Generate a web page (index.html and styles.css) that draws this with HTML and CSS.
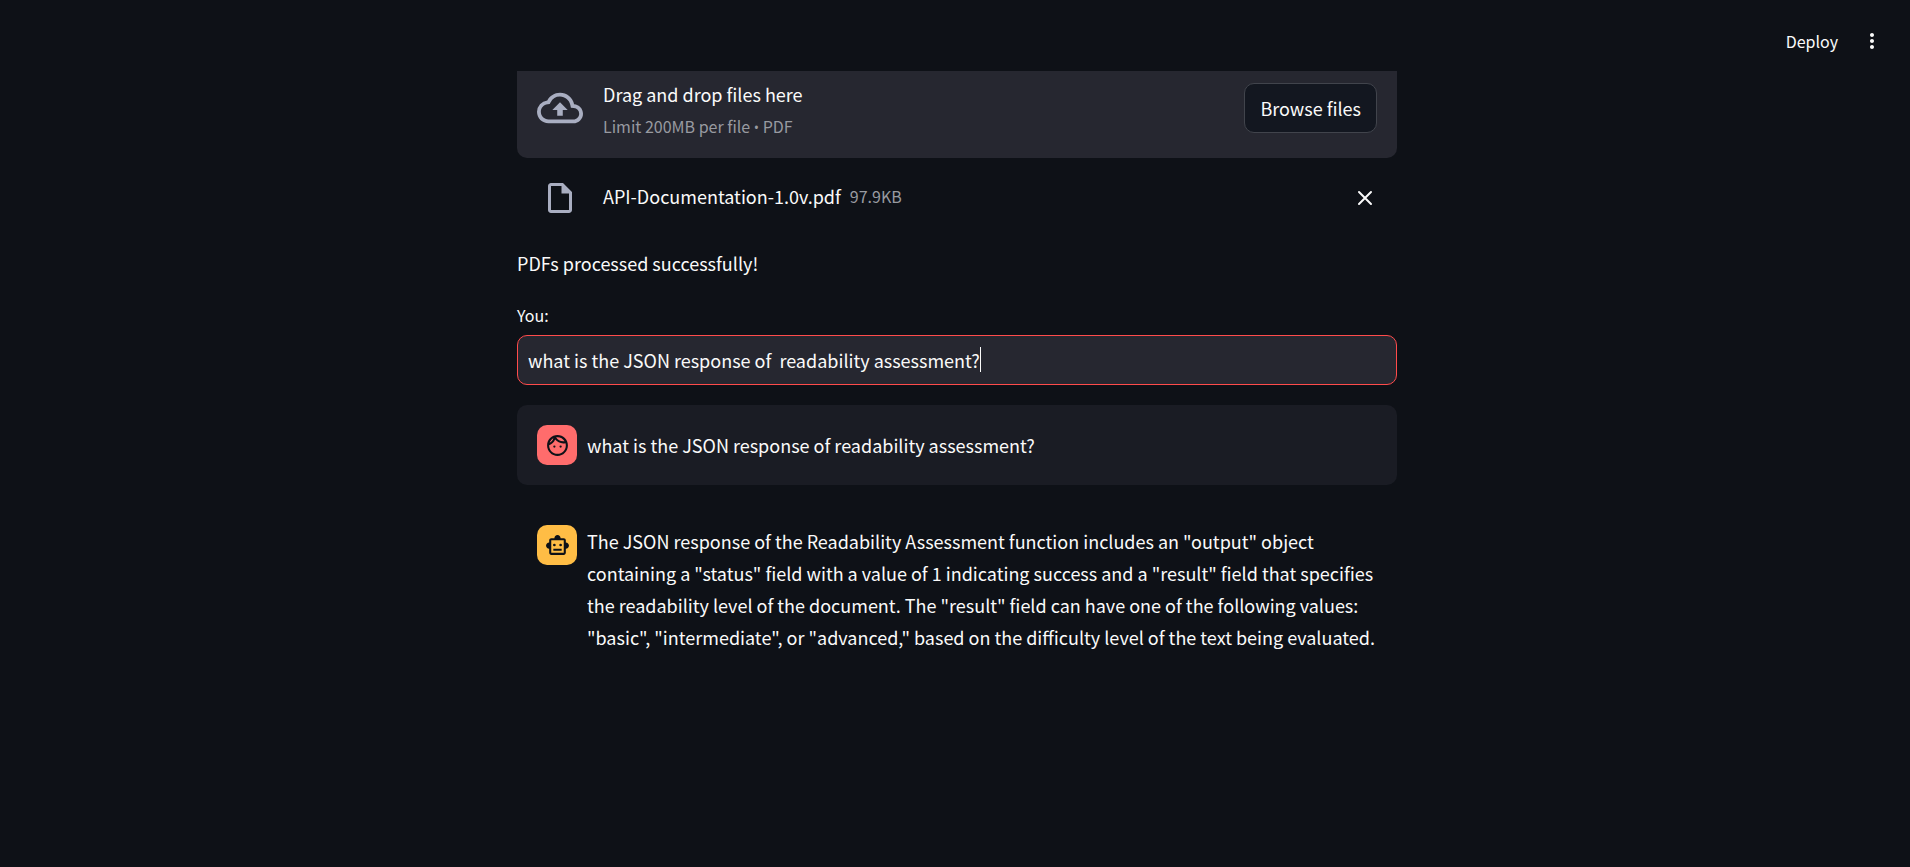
FILE: index.html
```html
<!DOCTYPE html>
<html lang="en">
<head>
<meta charset="utf-8">
<title>PDF Chat</title>
<link rel="stylesheet" href="styles.css">
</head>
<body>
<header class="toolbar">
  <button class="toolbar-button" type="button">Deploy</button>
  <button class="toolbar-button" type="button" aria-label="Main menu">
    <svg class="icon-menu" viewBox="0 0 24 24"><path d="M12 8c1.1 0 2-.9 2-2s-.9-2-2-2-2 .9-2 2 .9 2 2 2zm0 2c-1.1 0-2 .9-2 2s.9 2 2 2 2-.9 2-2-.9-2-2-2zm0 6c-1.1 0-2 .9-2 2s.9 2 2 2 2-.9 2-2-.9-2-2-2z"/></svg>
  </button>
</header>
<main class="content">
  <section class="dropzone">
    <svg class="icon-cloud" viewBox="0 0 24 24"><path d="M19.35 10.04A7.49 7.49 0 0012 4C9.11 4 6.6 5.64 5.35 8.04A5.994 5.994 0 000 14c0 3.31 2.69 6 6 6h13c2.76 0 5-2.24 5-5 0-2.64-2.05-4.78-4.65-4.96zM19 18H6c-2.21 0-4-1.79-4-4 0-2.05 1.53-3.76 3.56-3.97l1.07-.11.5-.95A5.469 5.469 0 0112 6c2.62 0 4.88 1.86 5.39 4.43l.3 1.5 1.53.11A2.98 2.98 0 0122 15c0 1.65-1.35 3-3 3zM8 13h2.55v3h2.9v-3H16l-4-4z"/></svg>
    <div class="dropzone-text">
      <span class="dropzone-title">Drag and drop files here</span>
      <span class="muted">Limit 200MB per file <span class="bullet">•</span> PDF</span>
    </div>
    <button class="browse" type="button">Browse files</button>
  </section>
  <div class="file">
    <svg class="icon-file" viewBox="0 0 24 24"><path d="M14 2H6c-1.1 0-1.99.9-1.99 2L4 20c0 1.1.89 2 1.99 2H18c1.1 0 2-.9 2-2V8l-6-6zM6 20V4h7v5h5v11H6z"/></svg>
    <div class="file-info">
      <span>API-Documentation-1.0v.pdf</span>
      <span class="muted">97.9KB</span>
    </div>
    <button class="remove" type="button" aria-label="Remove file">
      <svg class="icon-close" viewBox="0 0 16 16"><path d="M2 2l12 12M14 2L2 14"/></svg>
    </button>
  </div>
  <p class="status">PDFs processed successfully!</p>
  <label class="label" for="question">You:</label>
  <div class="field">
    <input class="question" id="question" type="text" value="what is the JSON response of  readability assessment?">
    <span class="caret"></span>
  </div>
  <article class="message message-user">
    <div class="avatar avatar-user">
      <svg class="icon-avatar" viewBox="0 0 24 24"><circle cx="9" cy="13" r="1.1"/><circle cx="15" cy="13" r="1.1"/><path d="M22 12c0 5.52-4.48 10-10 10S2 17.52 2 12 6.480 2 12 2s10 4.480 10 10zM10.660 4.120C12.060 6.440 14.600 8 17.500 8c.46 0 .91-.05 1.340-.12C17.440 5.560 14.900 4 12 4c-.46 0-.91.05-1.340.12zM4.420 9.470c1.710-.97 3.030-2.550 3.660-4.440C6.370 6 5.050 7.580 4.420 9.470zM20 12c0-.78-.12-1.530-.33-2.240-.7.15-1.420.24-2.170.24-3.130 0-5.920-1.440-7.760-3.690C8.690 8.870 6.600 10.880 4 11.860c.01.04 0 .09 0 .14 0 4.420 3.580 8 8 8s8-3.580 8-8z"/></svg>
    </div>
    <p class="message-text">what is the JSON response of readability assessment?</p>
  </article>
  <article class="message">
    <div class="avatar avatar-bot">
      <svg class="icon-avatar" viewBox="0 0 24 24"><path d="M20 9V7c0-1.100-.9-2-2-2h-3c0-1.660-1.340-3-3-3S9 3.340 9 5H6c-1.100 0-2 .9-2 2v2c-1.660 0-3 1.340-3 3s1.340 3 3 3v4c0 1.100.9 2 2 2h12c1.100 0 2-.9 2-2v-4c1.660 0 3-1.340 3-3s-1.340-3-3-3zm-2 10H6V7h12v12zM8 15h8v2H8v-2z"/><circle cx="9" cy="11.500" r="1.300"/><circle cx="15" cy="11.500" r="1.300"/></svg>
    </div>
    <p class="message-text">The JSON response of the Readability Assessment function includes an "output" object containing a "status" field with a value of 1 indicating success and a "result" field that specifies the readability level of the document. The "result" field can have one of the following values: "basic", "intermediate", or "advanced," based on the difficulty level of the text being evaluated.</p>
  </article>
</main>
</body>
</html>
```
FILE: styles.css
```css
* { box-sizing: border-box; }

body {
  margin: 0;
  min-height: 100vh;
  background: #0e1117;
  color: #fafafa;
  font-family: "Noto Sans CJK SC", "Noto Sans", sans-serif;
  font-size: 18px;
  line-height: 32px;
}

button, input { font: inherit; color: inherit; }
button { cursor: pointer; }
p { margin: 0; }
svg { display: block; fill: currentColor; }

.toolbar {
  display: flex;
  justify-content: flex-end;
  align-items: center;
  gap: 22px;
  height: 71px;
  padding: 10px 26px 0 0;
}

.toolbar-button {
  padding: 0;
  border: 0;
  background: none;
  font-size: 16px;
}

.icon-menu { width: 24px; height: 24px; }

.content {
  display: flex;
  flex-direction: column;
  width: 100%;
  max-width: 884px;
  margin: 0 auto;
  padding-left: 4px;
}

.dropzone {
  display: flex;
  align-items: center;
  gap: 20px;
  padding: 7px 20px 16px;
  border-radius: 0 0 10px 10px;
  background: #262730;
}

.icon-cloud {
  width: 46px;
  height: 46px;
  margin-bottom: 4px;
  color: #a9aec1;
}

.dropzone-text { display: flex; flex-direction: column; flex: 1; }

.muted { color: #989aa0; font-size: 16px; }

.bullet {
  font-family: "Open Sans", sans-serif;
  font-size: 14px;
  line-height: 1;
}

.browse {
  height: 50px;
  margin-bottom: 4px;
  padding: 0 15px;
  border: 1px solid #41444c;
  border-radius: 10px;
  background: #131720;
}

.file {
  display: flex;
  align-items: center;
  gap: 25px;
  height: 39px;
  margin-top: 20px;
  padding: 0 24px 0 25px;
}

.icon-file { width: 36px; height: 36px; color: #a9aec1; }

.file-info {
  display: flex;
  flex: 1;
  gap: 9px;
  padding-bottom: 3px;
}

.remove { padding: 0; border: 0; background: none; }

.icon-close {
  width: 16px;
  height: 16px;
  stroke: currentColor;
  stroke-width: 2;
  stroke-linecap: round;
}

.status { margin-top: 30px; }

.label { margin-top: 20px; font-size: 16px; }

.field { position: relative; margin-top: 4px; }

.question {
  display: block;
  width: 100%;
  height: 50px;
  padding: 0 10px;
  border: 1px solid #ff4b4b;
  border-radius: 10px;
  outline: 0;
  background: #262730;
  caret-color: transparent;
}

.caret {
  position: absolute;
  top: 12px;
  left: 463px;
  width: 1px;
  height: 25px;
  background: #fafafa;
}

.message {
  display: flex;
  align-items: flex-start;
  gap: 10px;
  margin-top: 20px;
  padding: 20px;
  border-radius: 10px;
}

.message-user { align-items: center; background: #1a1c24; }

.avatar {
  display: flex;
  flex-shrink: 0;
  align-items: center;
  justify-content: center;
  width: 40px;
  height: 40px;
  border-radius: 10px;
  color: #0e1117;
}

.avatar-user { background: #ff6c6c; }
.avatar-bot { background: #ffbd45; }

.icon-avatar { width: 25px; height: 25px; }
```
